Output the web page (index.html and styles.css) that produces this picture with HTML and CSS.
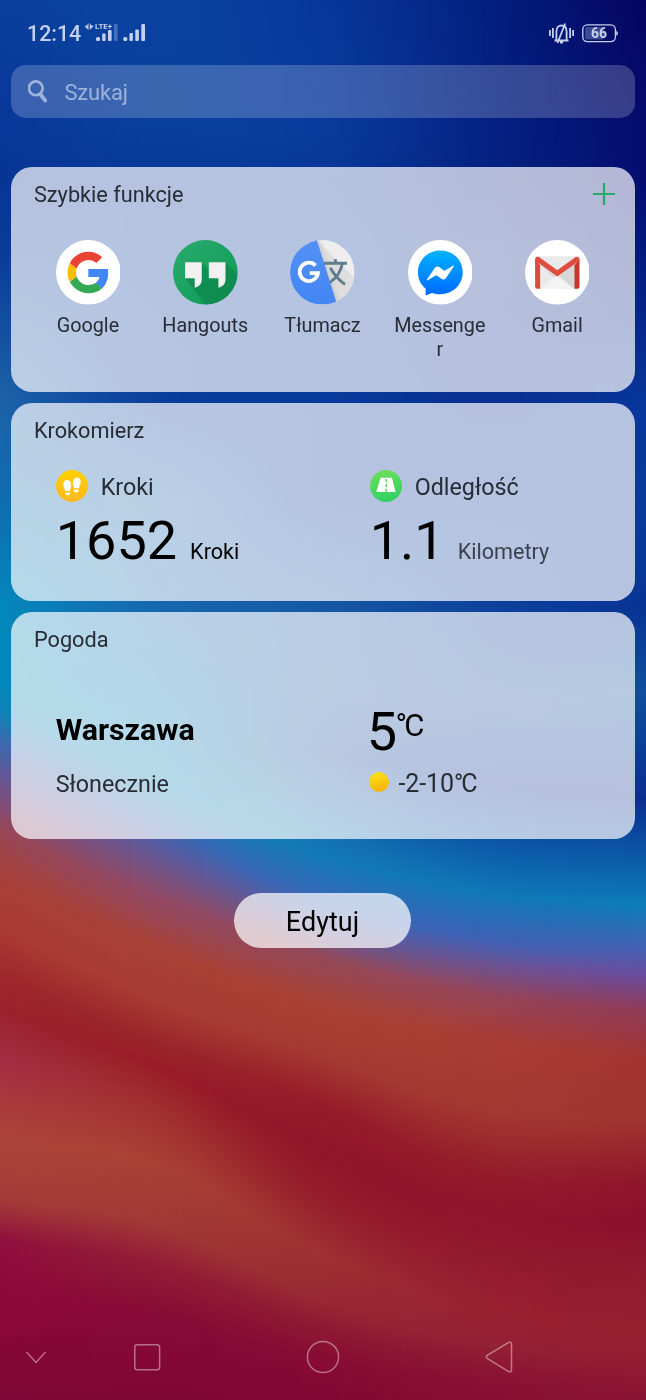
FILE: index.html
```html
<!DOCTYPE html>
<html lang="pl">
<head>
<meta charset="utf-8">
<title>Szybkie funkcje</title>
<link rel="stylesheet" href="styles.css">
</head>
<body>
<canvas class="wallpaper" id="wallpaper" width="646" height="1400"></canvas>
<div class="screen">
  <header class="status">
    <span class="clock">12:14</span>
    <svg class="signals" width="62" height="20" viewBox="0 0 62 20">
      <g fill="currentColor">
        <path d="M3.500 0v7L0 3.800V2.800h1.700zM4.800 7V0L6.400 2.600H8.200V3.600z"/>
        <rect x="11" y="14" width="4" height="4" rx="1.500"/>
        <rect x="17.200" y="10.500" width="3.400" height="7.500" rx="1"/>
        <rect x="23" y="7" width="3.600" height="11" rx="1"/>
        <rect x="29" y="1" width="3.600" height="17" rx="1" opacity=".32"/>
        <rect x="38.300" y="14" width="4" height="4" rx="1.500"/>
        <rect x="44.500" y="10" width="3.400" height="8" rx="1"/>
        <rect x="50.300" y="6.500" width="3.600" height="11.500" rx="1"/>
        <rect x="56.300" y="1" width="3.700" height="17" rx="1"/>
      </g>
      <text class="lte" x="10" y="6" textLength="17" lengthAdjust="spacingAndGlyphs">LTE+</text>
    </svg>
    <svg class="mute" width="25" height="21" viewBox="0 0 25 21" fill="none" stroke="currentColor" stroke-width="1.800">
      <path d="M.9 7v6M3.900 5v10M21.100 5v10M24.100 7v6"/>
      <path d="M5.500 17.500h14M7.400 17V8.500C7.400 4 9.800 2.500 12.500 2.500S17.600 4 17.600 8.500V17M11 19.500h3M8.500 20L16.200.5"/>
    </svg>
    <svg class="battery" width="36" height="19" viewBox="0 0 36 19">
      <rect x=".8" y=".8" width="32.600" height="16.800" rx="4.500" fill="none" stroke="currentColor" stroke-width="1.300"/>
      <rect x="3" y="3" width="19" height="12.400" rx="2" fill="currentColor" opacity=".3"/>
      <path d="M34.500 7.200c1.600.4 1.600 3.600 0 4z" fill="currentColor" stroke="currentColor" stroke-width=".6"/>
      <text class="level" x="17" y="14" text-anchor="middle">66</text>
    </svg>
  </header>

  <div class="search">
    <svg width="21" height="24" viewBox="0 0 21 24" fill="none" stroke="currentColor">
      <circle cx="7.800" cy="9.300" r="6.900" stroke-width="2.700"/>
      <path d="M12.200 15l4.900 6.400" stroke-width="4" stroke-linecap="round"/>
    </svg>
    <span>Szukaj</span>
  </div>

  <section class="card quick">
    <div class="card-head">
      <h2>Szybkie funkcje</h2>
      <svg width="22" height="22" viewBox="0 0 22 22" stroke="#27aa68" stroke-width="2.200"><path d="M11 0v22M0 11h22"/></svg>
    </div>
    <div class="apps">
      <div class="app">
        <svg viewBox="0 0 64 64">
          <circle cx="32" cy="32" r="32" fill="#fff"/>
          <g transform="translate(11.500 11.700) scale(.855)">
            <path fill="#4285f4" d="M47 24.500c0-1.600-.1-3.100-.4-4.500H24v9.200h12.900c-.6 3-2.300 5.500-4.800 7.200l7.700 6C44.400 38.200 47 32 47 24.500z"/>
            <path fill="#34a853" d="M24 48c6.500 0 11.900-2.100 15.900-5.800l-7.700-6c-2.200 1.500-4.900 2.300-8.200 2.300-6.300 0-11.600-4.200-13.500-9.900l-7.900 6.200C6.500 42.600 14.600 48 24 48z"/>
            <path fill="#fbbc05" d="M10.500 28.600C10 27.100 9.800 25.600 9.800 24s.3-3.100.7-4.600l-7.900-6.200C.9 16.500 0 20.100 0 24s.9 7.500 2.600 10.800z"/>
            <path fill="#ea4335" d="M24 9.500c3.500 0 6.700 1.200 9.200 3.600l6.900-6.900C35.900 2.400 30.500 0 24 0 14.600 0 6.500 5.400 2.600 13.200l7.900 6.200C12.400 13.700 17.700 9.500 24 9.500z"/>
          </g>
        </svg>
        <span>Google</span>
      </div>
      <div class="app">
        <svg viewBox="0 0 64 64">
          <defs>
            <linearGradient id="hg" x1="0" y1="0" x2="1" y2="1"><stop offset="0" stop-color="#2bab70"/><stop offset=".6" stop-color="#18a15d"/><stop offset="1" stop-color="#129355"/></linearGradient>
            <clipPath id="disc"><circle cx="32" cy="32" r="32"/></clipPath>
          </defs>
          <circle cx="32" cy="32" r="32" fill="url(#hg)"/>
          <g clip-path="url(#disc)">
            <path d="M12 38l9 0 7 -16 8 8v-8l16 0 24 24-20 26H38z" fill="#0b7f49" opacity=".55"/>
          </g>
          <path fill="#f1f1f1" d="M12 22h16.500v17c0 4.500-2.500 7.500-7 8.200V38H12zM35.500 22H52v17c0 4.500-2.500 7.500-7 8.200V38h-9.500z"/>
        </svg>
        <span>Hangouts</span>
      </div>
      <div class="app">
        <svg viewBox="0 0 64 64">
          <defs>
            <linearGradient id="tb" x1="0" y1="0" x2="0" y2="1"><stop offset="0" stop-color="#5491f5"/><stop offset="1" stop-color="#4285f4"/></linearGradient>
            <linearGradient id="ts" x1="0" y1=".3" x2=".5" y2="0"><stop offset="0" stop-color="#999" stop-opacity=".65"/><stop offset=".5" stop-color="#bbb" stop-opacity="0"/></linearGradient>
          </defs>
          <g clip-path="url(#disc)">
            <path fill="#eee" d="M0 0h64v64H0z"/>
            <path fill="#dedede" d="M27 0L64 38v26H44z"/>
            <path fill="url(#ts)" d="M27 0h14l20 64H46z"/>
            <path fill="url(#tb)" d="M0 0h26.700L46 62l-4 2H0z"/>
          </g>
          <path fill="none" stroke="#fff" stroke-width="3.700" d="M25.300 25.300a9.100 9.100 0 1 0 2.400 7.500H19.500"/>
          <path fill="none" stroke="#607d8b" stroke-width="2.800" d="M33.500 23H56.500M45 19v4M40 27.500c3 6 8 12 14.500 16.500M52 23c-1.500 8-6 14.500-12.500 19"/>
        </svg>
        <span>Tłumacz</span>
      </div>
      <div class="app">
        <svg viewBox="0 0 64 64">
          <defs><linearGradient id="mg" x1="0" y1="0" x2="0" y2="1"><stop offset="0" stop-color="#00b2ff"/><stop offset="1" stop-color="#006aff"/></linearGradient></defs>
          <circle cx="32" cy="32" r="32" fill="#fff"/>
          <path fill="url(#mg)" d="M32 10.500c-12.500 0-22.200 9.300-22.200 21.500 0 6.500 2.700 12.300 7.700 16.300V55l6.300-2.500c2.600.8 5.200 1.200 8.200 1.200 12.500 0 22.200-9.300 22.200-21.700S44.500 10.500 32 10.500z"/>
          <path fill="#fff" stroke="#fff" stroke-width="1" stroke-linejoin="round" d="M19.200 39.500l7.600-11.200c1.200-1.700 2.700-1.900 4.200-.8l4.300 3.200q.8.500 1.600 0l8-4.800-7.500 11.200c-1.200 1.700-2.700 2-4.200.9l-4.300-3.200q-.8-.500-1.600 0z"/>
        </svg>
        <span>Messenger</span>
      </div>
      <div class="app">
        <svg viewBox="0 0 64 64">
          <circle cx="32" cy="32" r="32" fill="#fff"/>
          <path fill="#eaeaea" d="M13 16h38v32H13z"/>
          <path fill="#d6d6d6" d="M15 24l17 13 17-14v25H40L25 33.500z"/>
          <path fill="#f3f3f3" d="M15 48l17-13.500L48 48z"/>
          <path fill="#dc4b3e" d="M10 19v27q0 2.300 2 2.300h3V25z"/>
          <path fill="#c5372c" d="M54 19v27q0 2.300-2 2.300h-3V25z"/>
          <path fill="none" stroke="#e04c3f" stroke-width="5" stroke-linejoin="miter" d="M12 18.700L32 33 52 18.700"/>
          <circle cx="12.500" cy="19" r="2.500" fill="#e04c3f"/><circle cx="51.500" cy="19" r="2.500" fill="#e04c3f"/>
        </svg>
        <span>Gmail</span>
      </div>
    </div>
  </section>

  <section class="card steps">
    <div class="card-head"><h2>Krokomierz</h2></div>
    <div class="columns">
      <div>
        <div class="metric">
          <svg viewBox="0 0 32 32">
            <defs><linearGradient id="yg" x1="0" y1="0" x2="0" y2="1"><stop offset="0" stop-color="#ffd000"/><stop offset="1" stop-color="#ffb824"/></linearGradient></defs>
            <circle cx="16" cy="16" r="16" fill="url(#yg)"/>
            <g fill="#fff">
              <path d="M7.300 14.500c0-2.700 1.500-4.400 3.600-4.400 2.400 0 4.200 1.900 4.200 4.700 0 2.300-1 4-.9 6.300H8.900c0-2.600-1.600-4.100-1.600-6.600zM9.100 22.400h5.200c0 1.600-.8 2.900-2.400 2.900s-2.700-1.200-2.800-2.900z"/>
              <path d="M24.700 12c0-2.800-1.500-4.500-3.600-4.500-2.400 0-4.200 1.900-4.100 4.800 0 2.300 1 3.700.9 5.700l5.200.5c0-2.600 1.600-4 1.600-6.500zM17.600 19.400l5.300.5c-.2 1.700-1.200 2.700-2.800 2.500-1.700-.1-2.500-1.400-2.500-3z"/>
            </g>
          </svg>
          <span>Kroki</span>
        </div>
        <div class="value"><b>1652</b><span class="black">Kroki</span></div>
      </div>
      <div>
        <div class="metric">
          <svg viewBox="0 0 32 32">
            <defs><linearGradient id="gg" x1="0" y1="0" x2=".3" y2="1"><stop offset="0" stop-color="#72df58"/><stop offset="1" stop-color="#35d163"/></linearGradient></defs>
            <circle cx="16" cy="16" r="16" fill="url(#gg)"/>
            <path fill="#fff" d="M10.600 7.800h11.300L25.600 22H6.300z"/>
            <path stroke="#50d65d" stroke-width="1.500" d="M16.200 9v3M16.200 13.700v3.300M16.200 18.700V22"/>
          </svg>
          <span>Odległość</span>
        </div>
        <div class="value"><b>1.1</b><span class="km">Kilometry</span></div>
      </div>
    </div>
  </section>

  <section class="card weather">
    <div class="card-head"><h2>Pogoda</h2></div>
    <div class="columns">
      <div>
        <div class="city">Warszawa</div>
        <div class="sky">Słonecznie</div>
      </div>
      <div>
        <div class="temp"><span>5</span><sup><i class="deg">°</i>C</sup></div>
        <div class="sky range"><i class="sun"></i>-2-10<i class="deg">°</i>C</div>
      </div>
    </div>
  </section>

  <button class="edit">Edytuj</button>

  <nav class="nav">
    <svg width="646" height="40" viewBox="0 0 646 40" fill="none" stroke="#fff" stroke-opacity=".42" stroke-width="1.500">
      <path d="M26.500 15l9.500 10.500L45.500 15"/>
      <rect x="134.800" y="7.800" width="24.800" height="25" rx="2.500"/>
      <circle cx="323" cy="20" r="15.600"/>
      <path d="M487.200 18.300q-2 1.500 0 3L508.300 34.300q3 1.400 3.200-1.200V6.800q-.2-2.400-3.200-1.200z"/>
    </svg>
  </nav>
</div>
<script src="wallpaper.js"></script>
</body>
</html>
```
FILE: styles.css
```css
* { box-sizing: border-box; }

body {
  margin: 0;
  background: #083a9a;
  font-family: Roboto, "Noto Sans", sans-serif;
  color: #272c35;
}

.wallpaper {
  position: absolute;
  top: 0;
  left: 0;
  display: block;
}

.screen {
  position: relative;
  display: flex;
  flex-direction: column;
  width: 646px;
  height: 1400px;
  overflow: hidden;
}

.status {
  display: flex;
  align-items: center;
  height: 64.6px;
  padding: 3px 28.5px 0 27px;
  color: #c5d1ec;
}

.clock {
  width: 55px;
  margin-right: 3px;
  font-size: 21.4px;
  font-weight: 500;
  line-height: 26px;
}

.lte { font: 700 7.5px Roboto, sans-serif; fill: currentColor; }
.signals { margin-top: -1px; }
.mute { margin: -1px 8px 0 auto; }
.battery { margin-top: -1px; }
.level { font: 700 14px Roboto, sans-serif; fill: currentColor; }

.search {
  display: flex;
  align-items: center;
  gap: 16px;
  height: 53.6px;
  margin: 0 11px;
  padding-left: 16.5px;
  border-radius: 15px;
  background: rgba(255, 255, 255, .2);
  color: #9db3dc;
  font-size: 22px;
}

.search span { padding-top: 2px; letter-spacing: -.2px; }

.card {
  margin: 0 11px 10.8px 10.7px;
  border-radius: 21px;
  background: rgba(255, 255, 255, .7);
}

.quick { height: 225.4px; margin-top: 48.6px; }
.steps { height: 198px; }
.weather { height: 226.8px; }

.card-head {
  display: flex;
  justify-content: space-between;
  align-items: center;
  height: 55px;
  padding: 0 20px 0 23.3px;
}

h2 {
  margin: 0;
  padding-top: 2px;
  font-size: 21.7px;
  font-weight: 400;
  line-height: 28px;
}

.quick h2 { padding-top: 1.5px; }

.apps {
  display: grid;
  grid-template-columns: repeat(5, 117.3px);
  padding: 18.5px 0 0 18.6px;
}

.app {
  display: flex;
  flex-direction: column;
  align-items: center;
  gap: 9.2px;
}

.app svg { width: 64.6px; height: 64.6px; }

.app span {
  max-width: 94px;
  font-size: 19.8px;
  line-height: 24px;
  text-align: center;
  overflow-wrap: anywhere;
}

.columns {
  display: grid;
  grid-template-columns: 314px 1fr;
  padding-left: 45px;
}

.metric {
  display: flex;
  align-items: center;
  gap: 13px;
  height: 33px;
  margin-top: 11.4px;
  font-size: 23.3px;
}

.metric svg { width: 32px; height: 32px; }
.metric span { padding-top: 3px; }

.value {
  display: flex;
  align-items: baseline;
  gap: 13px;
  height: 74px;
  padding-top: 2px;
  line-height: 74px;
  font-size: 21.6px;
}

.value b { font-size: 54px; font-weight: 400; color: #000; }
.black { color: #000; }
.km { color: #3b424e; }

.city {
  height: 58px;
  margin-top: 34.6px;
  font-size: 30.3px;
  font-weight: 700;
  line-height: 58px;
  color: #000;
}

.sky {
  display: flex;
  align-items: center;
  height: 46px;
  padding-top: 3px;
  font-size: 23.3px;
}

.temp {
  display: flex;
  height: 58px;
  margin: 34.6px 0 0 -3px;
  line-height: 61px;
  color: #000;
}

.temp span { font-size: 54px; }
.temp sup { font-size: 31px; line-height: 50px; letter-spacing: -1px; margin-left: -1.5px; }

.range { font-size: 25px; letter-spacing: -.1px; }
.deg { font-style: normal; margin-right: -2px; }

.sun {
  width: 20px;
  height: 20px;
  margin: -4px 9px 0 -.3px;
  border-radius: 50%;
  background: linear-gradient(165deg, #ffe619, #f5ad08);
}

.edit {
  align-self: center;
  width: 177.6px;
  height: 55.6px;
  margin: 43.2px 1px 0 0;
  padding: 4px 0 0;
  border: 0;
  border-radius: 28px;
  background: rgba(255, 255, 255, .72);
  font: 400 27px Roboto, sans-serif;
  color: #000;
}

.nav { margin-top: auto; height: 63px; }
.nav svg { display: block; }
```
FILE: wallpaper.js
```js
// Diagonal colour bands: each row is one band, given as [y, colour] at five x positions.
const xs = [0, 160, 323, 485, 646];
const bands = [
  [[0, '0a3f9c'], [0, '0a42a0'], [0, '07369a'], [0, '03207f'], [0, '050460']],
  [[130, '08369a'], [130, '093f9c'], [130, '083a9c'], [130, '042284'], [130, '040c6c']],
  [[180, '073594'], [180, '083898'], [180, '083696'], [180, '052382'], [180, '050c70']],
  [[250, '083c96'], [250, '083898'], [250, '083a9a'], [250, '0a2a88'], [250, '04187c']],
  [[400, '1c62a8'], [400, '0b3f9c'], [400, '083a9c'], [400, '083094'], [400, '08369a']],
  [[500, '0f6cae'], [500, '195fa8'], [500, '083c9c'], [500, '083a9a'], [500, '0a3a9c']],
  [[605, '0487bb'], [605, '1668ae'], [605, '1558a4'], [605, '0d429c'], [610, '083494']],
  [[650, '0487bb'], [690, '0873b2'], [690, '1858a2'], [710, '124c9c'], [690, '0f4f9c']],
  [[680, '0487bb'], [740, '087cb5'], [755, '144e9c'], [785, '0a3496'], [800, '0a2e90']],
  [[710, '0f82b8'], [785, '0f80b8'], [855, '127ab6'], [892, '0f78b6'], [905, '0c7db8']],
  [[745, '3f68ac'], [825, '3a66b0'], [900, '3868b8'], [940, '4060b4'], [950, '4660b2']],
  [[775, '655698'], [850, '5c5a9c'], [925, '5c5a9c'], [963, '6a5292'], [975, '6a4ca0']],
  [[830, '984555'], [895, '8f4a68'], [957, '934858'], [993, '94445a'], [1010, '903a58']],
  [[880, 'a84038'], [950, 'a84035'], [1010, 'aa4030'], [1040, 'a93c32'], [1060, 'a33430']],
  [[930, 'aa3932'], [1000, 'a83c32'], [1055, 'a53932'], [1110, 'a33731'], [1120, 'a03430']],
  [[980, '9e252c'], [1045, '9b242b'], [1105, '971c2a'], [1175, '941a2a'], [1185, '90152a']],
  [[1010, '9b222d'], [1068, '981c28'], [1150, '901528'], [1215, '90142a'], [1225, '8c0f2c']],
  [[1060, 'a52d42'], [1105, 'a02c2f'], [1195, '961c2b'], [1255, '93192c'], [1275, '921a2c']],
  [[1140, 'ad4438'], [1165, 'a94034'], [1255, '9e3033'], [1310, '9a2130'], [1335, '971f2e']],
  [[1200, 'a43a38'], [1225, 'a13835'], [1300, '982832'], [1345, '932033'], [1360, '951d30']],
  [[1240, '900f3e'], [1265, '941c36'], [1330, '8d1833'], [1370, '8c1434'], [1380, '901732']],
  [[1300, '8c0838'], [1320, '870936'], [1360, '870b34'], [1385, '891034'], [1390, '8c1432']],
  [[1400, '7f0634'], [1400, '800632'], [1400, '820732'], [1400, '880f33'], [1400, '8a1232']]
];

const rgb = h => [0, 2, 4].map(i => parseInt(h.slice(i, i + 2), 16));

// Catmull-Rom between p1 and p2, ends held by linear extension
function spline(v, i, t) {
  const p1 = v[i], p2 = v[i + 1];
  const p0 = i > 0 ? v[i - 1] : 2 * p1 - p2;
  const p3 = i + 2 < v.length ? v[i + 2] : 2 * p2 - p1;
  return .5 * (2 * p1 + (p2 - p0) * t + (2 * p0 - 5 * p1 + 4 * p2 - p3) * t * t
    + (3 * p1 - p0 - 3 * p2 + p3) * t * t * t);
}

const canvas = document.getElementById('wallpaper');
const ctx = canvas.getContext('2d');
const rows = bands.map(b => ({
  y: b.map(p => p[0]),
  c: [0, 1, 2].map(k => b.map(p => rgb(p[1])[k]))
}));

for (let x = 0; x < 646; x++) {
  let i = 0;
  while (i < 3 && x > xs[i + 1]) i++;
  const t = (x - xs[i]) / (xs[i + 1] - xs[i]);
  const g = ctx.createLinearGradient(0, 0, 0, 1400);
  for (const r of rows) {
    const y = Math.min(1400, Math.max(0, spline(r.y, i, t)));
    const c = r.c.map(v => Math.max(0, Math.min(255, Math.round(spline(v, i, t)))));
    g.addColorStop(y / 1400, `rgb(${c})`);
  }
  ctx.fillStyle = g;
  ctx.fillRect(x, 0, 1, 1400);
}
```
